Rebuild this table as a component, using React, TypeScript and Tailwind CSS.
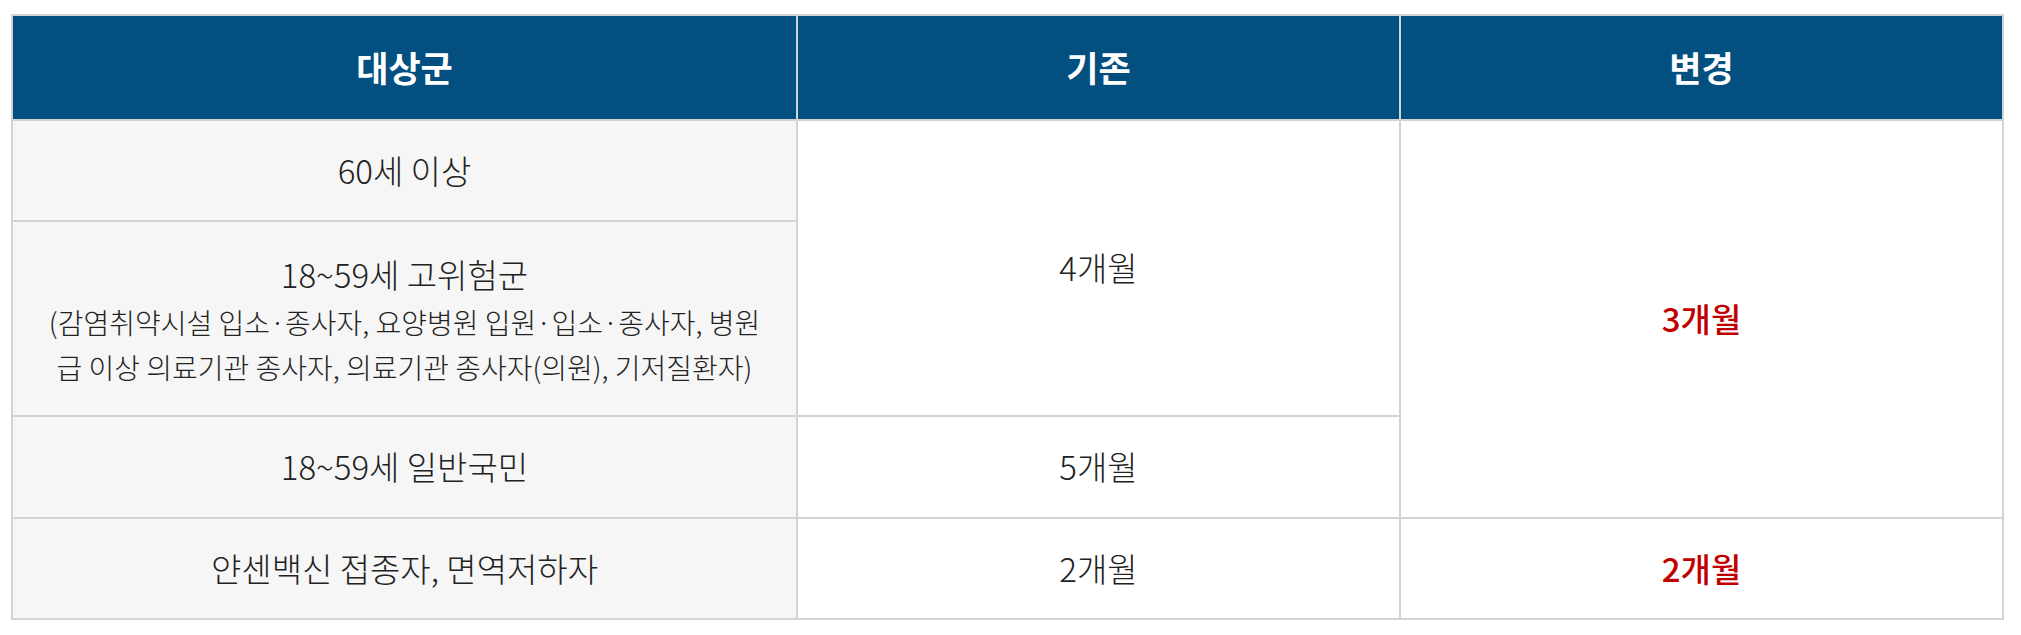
import React from "react";

const cell = "border-2 border-[#d3d3d3] text-center align-middle";

const App: React.FC = () => {
  return (
    <div className="w-full bg-white pt-[14px] pl-[11px] font-['Noto_Sans_CJK_KR',sans-serif] text-[#222]">
      <table className="w-[1993px] table-fixed border-collapse border-2 border-[#d3d3d3]">
        <colgroup>
          <col className="w-[785px]" />
          <col className="w-[603px]" />
          <col className="w-[603px]" />
        </colgroup>
        <thead>
          <tr className="h-[105px] bg-[#024f80] text-[35px] font-bold text-white">
            <th className={cell}>대상군</th>
            <th className={cell}>기존</th>
            <th className={cell}>변경</th>
          </tr>
        </thead>
        <tbody className="text-[33px] font-light">
          <tr className="h-[101px]">
            <td className={`${cell} bg-[#f6f6f6]`}>60세 이상</td>
            <td className={`${cell} bg-white`} rowSpan={2}>
              4개월
            </td>
            <td
              className={`${cell} bg-white font-medium text-[#c00000]`}
              rowSpan={3}
            >
              3개월
            </td>
          </tr>
          <tr className="h-[195px]">
            <td className={`${cell} bg-[#f6f6f6]`}>
              <div className="leading-[52px]">18~59세 고위험군</div>
              <div className="px-2 text-[28px] leading-[45px]">
                (감염취약시설 입소·종사자, 요양병원 입원·입소·종사자, 병원
                <br />
                급 이상 의료기관 종사자, 의료기관 종사자(의원), 기저질환자)
              </div>
            </td>
          </tr>
          <tr className="h-[102px]">
            <td className={`${cell} bg-[#f6f6f6]`}>18~59세 일반국민</td>
            <td className={`${cell} bg-white`}>5개월</td>
          </tr>
          <tr className="h-[101px]">
            <td className={`${cell} bg-[#f6f6f6]`}>얀센백신 접종자, 면역저하자</td>
            <td className={`${cell} bg-white`}>2개월</td>
            <td className={`${cell} bg-white font-medium text-[#c00000]`}>
              2개월
            </td>
          </tr>
        </tbody>
      </table>
    </div>
  );
};

export default App;
